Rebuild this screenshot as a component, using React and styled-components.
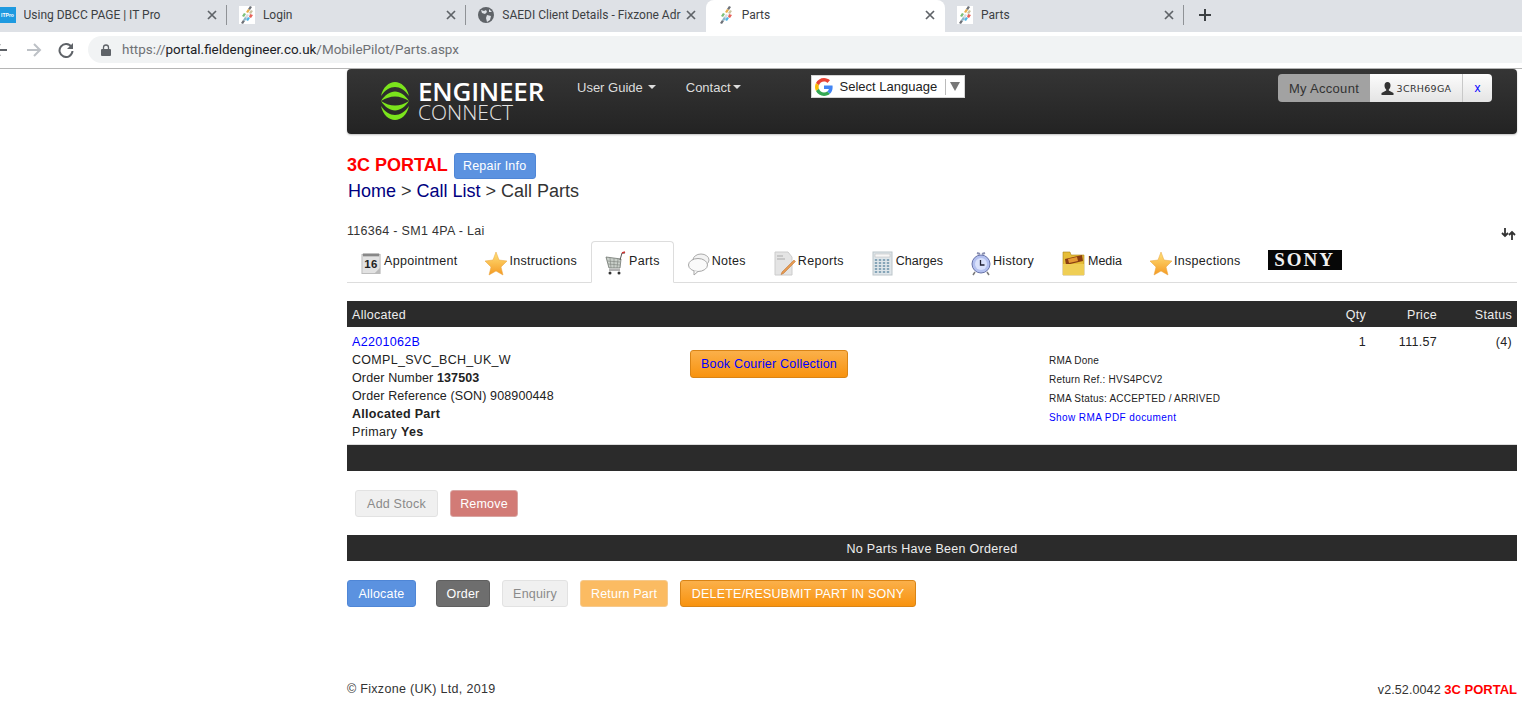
import React, { useId } from "react"
import styled, { createGlobalStyle } from "styled-components"

const GlobalStyle = createGlobalStyle`
  html, body {
    margin: 0;
    padding: 0;
    background: #fff;
    overflow: hidden;
  }
  body {
    font-family: "Liberation Sans", Arial, sans-serif;
    font-size: 12.5px;
    color: #333;
  }
`

/* browser chrome */
const TabStrip = styled.div`
  display: flex;
  height: 32px;
  background: #dee1e6;
  margin-left: -12.5px;
  width: 1534px;
  font-family: Roboto, "Noto Sans", sans-serif;
  font-size: 12px;
  color: #3c4043;
`
const BrowserTab = styled.div`
  display: flex;
  align-items: center;
  width: 239.4px;
  box-sizing: border-box;
  height: 32px;
  padding: 0 9px 2px 12px;
  background: ${(p) => (p.$active ? "#fff" : "transparent")};
  border-radius: ${(p) => (p.$active ? "8px 8px 0 0" : "0")};
  position: relative;
  &::after {
    content: "";
    display: ${(p) => (p.$divider ? "block" : "none")};
    position: absolute;
    right: 0;
    top: 5px;
    height: 20px;
    width: 1px;
    background: #8f9296;
  }
`
const TabTitle = styled.span`
  flex: 1;
  margin-left: 8px;
  white-space: nowrap;
  overflow: hidden;
`
const TabClose = styled.svg`
  width: 10px;
  height: 10px;
  flex: none;
  margin: 0 1px 0 3px;
`
const NewTab = styled.svg`
  width: 12px;
  height: 12px;
  margin: 9px 0 0 15px;
`
const ITProIcon = styled.span`
  width: 16px;
  height: 16px;
  flex: none;
  background: #1e9ae0;
  color: #fff;
  font: bold 5px/16px "Liberation Sans", sans-serif;
  text-align: center;
`
const Toolbar = styled.div`
  display: flex;
  align-items: center;
  height: 37px;
  box-sizing: border-box;
  padding: 2px 0 3px;
  background: #fff;
  border-bottom: 1px solid #b5b5b5;
`
const NavIcon = styled.svg`
  width: 16px;
  height: 16px;
  flex: none;
  margin-left: ${(p) => p.$gap}px;
`
const Omnibox = styled.div`
  flex: 1;
  display: flex;
  align-items: center;
  height: 27px;
  margin-left: 14px;
  padding-left: 13px;
  background: #f1f3f4;
  border-radius: 14px 0 0 14px;
  font-family: Roboto, "Noto Sans", sans-serif;
  font-size: 13.45px;
  color: #6f7175;
`
const LockIcon = styled.svg`
  width: 10px;
  height: 12px;
  margin-right: 11px;
`
const Host = styled.span`
  color: #202124;
`

/* page */
const Page = styled.div`
  width: 1170px;
  margin-left: 347px;
`
const NavBar = styled.header`
  display: flex;
  height: 65px;
  padding-left: 33px;
  box-sizing: border-box;
  border-radius: 4px;
  background: linear-gradient(#353535, #232323);
  box-shadow: 0 1px 2px rgba(0, 0, 0, 0.25);
  color: #ddd;
  font-size: 13px;
`
const Brand = styled.div`
  display: flex;
  width: 197px;
  padding-top: 10px;
  flex: none;
`
const BrandMark = styled.svg`
  width: 30px;
  height: 38px;
  margin-right: 8px;
  margin-top: 3px;
`
const BrandText = styled.div`
  font-family: "Open Sans", sans-serif;
  color: #fff;
`
const BrandTop = styled.div`
  font-size: 26px;
  line-height: 24px;
  font-weight: 600;
  letter-spacing: -0.2px;
`
const BrandBottom = styled.div`
  font-size: 21px;
  line-height: 18px;
  font-weight: 300;
  color: #e4e4e4;
`
const NavLink = styled.div`
  display: flex;
  align-items: center;
  height: 36px;
  margin-right: ${(p) => p.$gap}px;
`
const Caret = styled.span`
  width: 0;
  height: 0;
  margin-left: ${(p) => p.$gap}px;
  border: 4px solid transparent;
  border-top-color: #ddd;
  border-bottom: 0;
`
const LanguageBox = styled.div`
  display: flex;
  align-items: center;
  width: 154px;
  height: 23px;
  margin-top: 6px;
  box-sizing: border-box;
  padding-left: 3px;
  background: #fff;
  border: 1px solid #d5d5d5;
  color: #222;
  font-size: 13px;
`
const GoogleIcon = styled.svg`
  width: 18px;
  height: 18px;
  margin-right: 7px;
`
const LanguageSplit = styled.span`
  width: 1px;
  height: 16px;
  background: #bbb;
  margin: 0 4px 0 8px;
`
const LanguageArrow = styled.span`
  width: 0;
  height: 0;
  border: 5px solid transparent;
  border-top: 9px solid #777;
  border-bottom: 0;
`
const AccountGroup = styled.div`
  display: flex;
  height: 28px;
  margin: 5px 25px 0 auto;
  border-radius: 4px;
  overflow: hidden;
`
const AccountLabel = styled.div`
  width: 92px;
  display: flex;
  align-items: center;
  justify-content: center;
  background: #a2a2a2;
  color: #333;
  font-size: 13px;
  letter-spacing: 0.3px;
`
const AccountUser = styled.div`
  width: 93px;
  display: flex;
  align-items: center;
  justify-content: center;
  box-sizing: border-box;
  background: linear-gradient(#fcfcfc, #e4e4e4);
  border-right: 1px solid #c8c8c8;
  color: #333;
  font-family: "DejaVu Sans", sans-serif;
  font-size: 9.5px;
  letter-spacing: 0.3px;
`
const UserIcon = styled.svg`
  width: 13px;
  height: 13px;
  margin-right: 3px;
`
const AccountClose = styled.div`
  width: 29px;
  display: flex;
  align-items: center;
  justify-content: center;
  background: linear-gradient(#fcfcfc, #e4e4e4);
  color: #00f;
  font-size: 12px;
`
const TitleRow = styled.div`
  display: flex;
  align-items: center;
  margin-top: 19px;
  height: 26px;
`
const PortalTitle = styled.span`
  font-size: 18px;
  font-weight: bold;
  color: #f00;
  margin: -2px 6px 0 0;
`
const Breadcrumb = styled.div`
  font-size: 18px;
  line-height: 24px;
  padding-left: 1px;
  color: #333;
`
const Crumb = styled.a`
  color: #000080;
`
const InfoRow = styled.div`
  display: flex;
  justify-content: space-between;
  align-items: center;
  margin-top: 18px;
  height: 20px;
  letter-spacing: 0.3px;
`
const SwapIcon = styled.svg`
  width: 15px;
  height: 14px;
  margin: 5px 1px 0 0;
`
const TabNav = styled.nav`
  display: flex;
  height: 42px;
  box-sizing: border-box;
  border-bottom: 1px solid #ddd;
`
const TabLink = styled.div`
  display: flex;
  align-items: center;
  height: 42px;
  box-sizing: border-box;
  padding: 0 13px 2px;
  letter-spacing: ${(p) => (p.$tight ? "0" : "0.3px")};
  color: #222;
  border: 1px solid ${(p) => (p.$active ? "#ddd" : "transparent")};
  border-bottom-color: ${(p) => (p.$active ? "#fff" : "transparent")};
  border-radius: 4px 4px 0 0;
  background: ${(p) => (p.$active ? "#fff" : "transparent")};
`
const TabIcon = styled.svg`
  width: ${(p) => p.$w || 22}px;
  height: 25px;
  flex: none;
  margin: 5px 2px 0 0;
`
const SonyLogo = styled.div`
  width: 74px;
  height: 20px;
  margin: 9px 0 0 13px;
  background: #070707;
  color: #f2f2f2;
  font: bold 19px/20px "Liberation Serif", serif;
  text-align: center;
  letter-spacing: 2px;
`
const DarkBar = styled.div`
  display: ${(p) => (p.$grid ? "grid" : "block")};
  grid-template-columns: 343px 359px 280px 42px 71px 75px;
  height: 26px;
  line-height: 28px;
  margin-top: ${(p) => p.$top || 0}px;
  background: #2b2b2b;
  color: #eee;
  text-align: ${(p) => (p.$center ? "center" : "left")};
  letter-spacing: 0.3px;
`
const PartsRow = styled.div`
  display: grid;
  grid-template-columns: 343px 359px 280px 42px 71px 75px;
  height: 118px;
  box-sizing: border-box;
  border-bottom: 1px solid #ddd;
  letter-spacing: 0.3px;
`
const Cell = styled.div`
  padding: ${(p) => (p.$body ? "6px 5px 0" : "0 5px")};
  text-align: ${(p) => (p.$right ? "right" : "left")};
`
const PartLine = styled.div`
  line-height: 18px;
  color: #222;
  letter-spacing: ${(p) => (p.$tight ? "0.12px" : "inherit")};
`
const PartLink = styled.a`
  color: #00f;
`
const CourierCell = styled.div`
  padding-top: 23px;
`
const RmaCell = styled.div`
  padding-top: 24px;
  font-size: 10px;
  line-height: 19px;
  color: #222;
  letter-spacing: 0.22px;
`
const RmaLink = styled.a`
  color: #00f;
  letter-spacing: 0.4px;
`
const Qty = styled.div`
  padding: 6px 5px 0 0;
  line-height: 18px;
  text-align: right;
  color: #222;
`
const ButtonRow = styled.div`
  display: flex;
  align-items: center;
  margin-top: ${(p) => p.$top}px;
  padding-left: ${(p) => p.$left || 0}px;
`
const tones = {
  blue: ["#5b92e0", "#5b92e0", "#fff", "#4f86d6"],
  grey: ["#6e6e6e", "#6e6e6e", "#fff", "#5f5f5f"],
  off: ["#f0f0f0", "#f0f0f0", "#8a8a8a", "#e2e2e2"],
  red: ["#d27b76", "#d27b76", "#fff", "#d9a5a2"],
  pale: ["#fbbb62", "#fbbb62", "#fff", "#f5c98d"],
  orange: ["#fbb04a", "#f8930f", "#fff", "#d98416"],
}
const Button = styled.button`
  height: ${(p) => p.$h || 27}px;
  width: ${(p) => p.$w}px;
  margin-right: ${(p) => p.$gap || 0}px;
  padding: 0;
  border-radius: 3px;
  border: 1px solid ${(p) => tones[p.$tone][3]};
  background: linear-gradient(${(p) => tones[p.$tone][0]}, ${(p) => tones[p.$tone][1]});
  color: ${(p) => p.$ink || tones[p.$tone][2]};
  font-family: "Liberation Sans", Arial, sans-serif;
  font-size: 12.5px;
  letter-spacing: 0.2px;
`
const Footer = styled.footer`
  display: flex;
  justify-content: space-between;
  margin-top: 75px;
  letter-spacing: 0.3px;
`
const FooterVersion = styled.span`
  letter-spacing: 0.1px;
`
const FooterBrand = styled.b`
  color: #f00;
  font-size: 13px;
  letter-spacing: 0;
`

const Close = () => (
  <TabClose viewBox="0 0 10 10">
    <path d="M1 1l8 8M9 1L1 9" stroke="#5f6368" strokeWidth="1.7" />
  </TabClose>
)

const SiteFavicon = () => (
  <svg width="16" height="18" viewBox="0 0 16 18" style={{ flex: "none" }}>
    <rect width="16" height="18" fill="#fff" />
    <path d="M11 0l2 1-2 3-2-1zM4 14l2 1-2 3-2-1z" fill="#6d7178" />
    <path d="M9 3l2 1-2 3-2-1z" fill="#e8b04c" />
    <path d="M12 4l2 1-2 3-2-1z" fill="#c9c4a0" />
    <path d="M5 7l2 1-2 3-2-1z" fill="#7cc07a" />
    <path d="M11 8l3 1-2 3-2-1z" fill="#e7625a" />
    <path d="M8 8l2 1-2 3-2-1z" fill="#d9dde0" />
    <path d="M6 11l2 1-2 3-2-1z" fill="#8fb7c9" />
    <path d="M9 11l2 1-2 3-2-1z" fill="#52b7e6" />
  </svg>
)

const GlobeFavicon = () => (
  <svg width="16" height="16" viewBox="0 0 16 16" style={{ flex: "none" }}>
    <circle cx="8" cy="8" r="8" fill="#5f6368" />
    <path d="M3 3l3 1 2-1 1 2-2 2-3-1zM9 8l4 1-1 4-3 2-1-4zM11 2l3 3-3 0z" fill="#dee1e6" />
  </svg>
)

const Star = () => {
  const id = useId()
  return (
    <TabIcon viewBox="0 0 22 25">
      <defs>
        <linearGradient id={id} x1="0" y1="0" x2="0" y2="1">
          <stop offset="0" stopColor="#ffe27a" />
          <stop offset="1" stopColor="#f59a23" />
        </linearGradient>
      </defs>
      <path d="M11 1l3 8 8 1-6 6 2 8-7-4-7 4 2-8-6-6 8-1z" fill={`url(#${id})`} stroke="#e8a33a" strokeWidth=".5" />
    </TabIcon>
  )
}

const CalendarIcon = () => (
  <TabIcon $w={21} viewBox="0 0 22 25">
    <rect x="1" y="3" width="19" height="20" fill="#e2e2e2" stroke="#bbb" />
    <path d="M2 2h17v3H2z" fill="#888" />
    <text x="10.5" y="17" textAnchor="middle" fontSize="12" fontWeight="bold" fontFamily="Liberation Sans" fill="#222">16</text>
    <path d="M14 23l6-6v6z" fill="#bbb" />
  </TabIcon>
)

const CartIcon = () => (
  <TabIcon viewBox="0 0 22 25">
    <path d="M1 6l15 2-1 9H4z" fill="#c9cfc9" stroke="#6f756f" strokeWidth=".8" />
    <path d="M5 7l1 10M9 7.500v9.500M13 8l-1 9M2 10l13 1M3 13l12 1" stroke="#7d837d" strokeWidth=".6" />
    <path d="M15 9l2-7h3" stroke="#555" fill="none" />
    <path d="M17 2l3-1" stroke="#c33" strokeWidth="1.500" />
    <path d="M4 19h11" stroke="#666" />
    <circle cx="5" cy="22" r="1.500" fill="#333" />
    <circle cx="14" cy="22" r="1.500" fill="#333" />
  </TabIcon>
)

const NotesIcon = () => (
  <TabIcon viewBox="0 0 22 25">
    <ellipse cx="13" cy="9" rx="8" ry="6" fill="#f3f3f3" stroke="#aaa" />
    <ellipse cx="10" cy="14" rx="9.500" ry="6.500" fill="#fafafa" stroke="#a5a5a5" />
    <path d="M6 20v4l4-3.500" fill="#fafafa" stroke="#a5a5a5" />
  </TabIcon>
)

const ReportIcon = () => (
  <TabIcon viewBox="0 0 22 25">
    <path d="M1 1h13l4 5v18H1z" fill="#e4e4e4" stroke="#ccc" />
    <path d="M3 5h6M3 8h8" stroke="#aaa" />
    <path d="M8 21l12-12 1.500 1.500-12 12-2.500 1z" fill="#e69a50" stroke="#b86f2e" strokeWidth=".5" />
  </TabIcon>
)

const CalculatorIcon = () => (
  <TabIcon viewBox="0 0 22 25">
    <rect x="1" y="1" width="19" height="23" fill="#dfe6ea" stroke="#bcc5ca" />
    <rect x="3" y="3" width="15" height="3" fill="#f7f7f7" stroke="#b5b5b5" strokeWidth=".5" />
    <path d="M4 8v14M8 8v14M12 8v14M16 8v14" stroke="#86a5b8" strokeWidth="2.400" strokeDasharray="2 1" />
  </TabIcon>
)

const ClockIcon = () => (
  <TabIcon $w={20} viewBox="0 0 20 25">
    <path d="M6 2l3 1M14 2l-3 1" stroke="#8a8fb0" strokeWidth="2" />
    <path d="M4 21l-2 3M16 21l2 3" stroke="#777" strokeWidth="1.500" />
    <circle cx="10" cy="13" r="9" fill="#b3c0ef" stroke="#6772a8" />
    <circle cx="10" cy="13" r="6" fill="#d9e1fb" />
    <path d="M9.500 9v5h4" stroke="#223" strokeWidth="1.300" fill="none" />
  </TabIcon>
)

const MediaIcon = () => (
  <TabIcon $w={24} viewBox="0 0 24 25">
    <path d="M1 1h7l1 3h13v20H1z" fill="#e6bd37" stroke="#a9851a" strokeWidth=".6" />
    <path d="M3 8l17-4 1 6-17 4z" fill="#8a3d12" />
    <path d="M6 8l9-2 1 4-9 2z" fill="#e59a34" />
    <path d="M1 13h21v11H1z" fill="#efce55" />
  </TabIcon>
)

const menu = [
  { label: "Appointment", icon: <CalendarIcon /> },
  { label: "Instructions", icon: <Star /> },
  { label: "Parts", icon: <CartIcon />, active: true },
  { label: "Notes", icon: <NotesIcon /> },
  { label: "Reports", icon: <ReportIcon /> },
  { label: "Charges", icon: <CalculatorIcon />, tight: true },
  { label: "History", icon: <ClockIcon /> },
  { label: "Media", icon: <MediaIcon />, tight: true },
  { label: "Inspections", icon: <Star /> },
]

const App = () => {
  return (
    <>
      <GlobalStyle />
      <TabStrip>
        <BrowserTab $divider>
          <ITProIcon>ITPro</ITProIcon>
          <TabTitle>Using DBCC PAGE | IT Pro</TabTitle>
          <Close />
        </BrowserTab>
        <BrowserTab $divider>
          <SiteFavicon />
          <TabTitle>Login</TabTitle>
          <Close />
        </BrowserTab>
        <BrowserTab>
          <GlobeFavicon />
          <TabTitle>SAEDI Client Details - Fixzone Adr</TabTitle>
          <Close />
        </BrowserTab>
        <BrowserTab $active>
          <SiteFavicon />
          <TabTitle>Parts</TabTitle>
          <Close />
        </BrowserTab>
        <BrowserTab $divider>
          <SiteFavicon />
          <TabTitle>Parts</TabTitle>
          <Close />
        </BrowserTab>
        <NewTab viewBox="0 0 12 12">
          <path d="M6 0v12M0 6h12" stroke="#3c4043" strokeWidth="2" />
        </NewTab>
      </TabStrip>
      <Toolbar>
        <NavIcon $gap={-8} viewBox="0 0 16 16">
          <path d="M15 8H2M8 2L2 8l6 6" fill="none" stroke="#5f6368" strokeWidth="2" />
        </NavIcon>
        <NavIcon $gap={18} viewBox="0 0 16 16">
          <path d="M1 8h13M8 2l6 6-6 6" fill="none" stroke="#bdc1c6" strokeWidth="2" />
        </NavIcon>
        <NavIcon $gap={16} viewBox="0 0 16 16">
          <path d="M13.500 5A6.500 6.500 0 1 0 14.500 9" fill="none" stroke="#5f6368" strokeWidth="2" />
          <path d="M15 1v6H9z" fill="#5f6368" />
        </NavIcon>
        <Omnibox>
          <LockIcon viewBox="0 0 10 12">
            <path d="M2.500 5V3.500a2.500 2.500 0 0 1 5 0V5" fill="none" stroke="#5f6368" strokeWidth="1.300" />
            <rect y="5" width="10" height="7" rx="1" fill="#5f6368" />
          </LockIcon>
          https://<Host>portal.fieldengineer.co.uk</Host>/MobilePilot/Parts.aspx
        </Omnibox>
      </Toolbar>
      <Page>
        <NavBar>
          <Brand>
            <BrandMark viewBox="0 0 30 38">
              <g fill="#7be41c">
                <path d="M1 14C3 5 9 0 15 0s12 5 14 14C25 8 20 5 15 5S5 8 1 14z" />
                <path d="M1 19C5 13 10 9.500 15 9.500S25 13 29 19C24 16 20 14.500 15 14.500S6 16 1 19z" />
                <g transform="matrix(1 0 0 -1 0 38)">
                  <path d="M1 14C3 5 9 0 15 0s12 5 14 14C25 8 20 5 15 5S5 8 1 14z" />
                  <path d="M1 19C5 13 10 9.500 15 9.500S25 13 29 19C24 16 20 14.500 15 14.500S6 16 1 19z" />
                </g>
              </g>
            </BrandMark>
            <BrandText>
              <BrandTop>ENGINEER</BrandTop>
              <BrandBottom>CONNECT</BrandBottom>
            </BrandText>
          </Brand>
          <NavLink $gap={30}>
            User Guide<Caret $gap={5} />
          </NavLink>
          <NavLink $gap={70}>
            Contact<Caret $gap={2} />
          </NavLink>
          <LanguageBox>
            <GoogleIcon viewBox="0 0 48 48">
              <path fill="#EA4335" d="M24 9.500c3.500 0 6.700 1.300 9.100 3.500l6.800-6.800C35.800 2.400 30.200 0 24 0 14.600 0 6.500 5.400 2.600 13.200l7.900 6.200C12.400 13.700 17.700 9.500 24 9.500z" />
              <path fill="#4285F4" d="M47 24.500c0-1.600-.1-3.100-.4-4.500H24v9h13c-.6 3-2.300 5.500-4.800 7.200l7.700 6C44.400 37.900 47 31.800 47 24.500z" />
              <path fill="#FBBC05" d="M10.500 28.600c-.5-1.400-.8-3-.8-4.600s.3-3.200.8-4.600l-7.900-6.200C.9 16.500 0 20.100 0 24s.9 7.500 2.600 10.800z" />
              <path fill="#34A853" d="M24 48c6.500 0 11.900-2.100 15.900-5.800l-7.700-6c-2.100 1.400-4.900 2.300-8.200 2.300-6.300 0-11.600-4.200-13.500-9.900l-7.900 6.200C6.500 42.600 14.600 48 24 48z" />
            </GoogleIcon>
            Select Language
            <LanguageSplit />
            <LanguageArrow />
          </LanguageBox>
          <AccountGroup>
            <AccountLabel>My Account</AccountLabel>
            <AccountUser>
              <UserIcon viewBox="0 0 13 13">
                <path d="M6.500 0C8.500 0 9.500 1.500 9.500 3.500S8.500 7 7.800 7.500v1L12.500 11v2H.500v-2l4.700-2.500v-1C4.500 7 3.500 5.500 3.500 3.500S4.500 0 6.500 0z" fill="#333" />
              </UserIcon>
              3CRH69GA
            </AccountUser>
            <AccountClose>x</AccountClose>
          </AccountGroup>
        </NavBar>

        <TitleRow>
          <PortalTitle>3C PORTAL</PortalTitle>
          <Button $tone="blue" $w={82} $h={26}>Repair Info</Button>
        </TitleRow>
        <Breadcrumb>
          <Crumb>Home</Crumb> &gt; <Crumb>Call List</Crumb> &gt; Call Parts
        </Breadcrumb>

        <InfoRow>
          116364 - SM1 4PA - Lai
          <SwapIcon viewBox="0 0 15 14">
            <path d="M4 1v8M1 6l3 3 3-3M11 13V5M8 8l3-3 3 3" fill="none" stroke="#333" strokeWidth="1.800" />
          </SwapIcon>
        </InfoRow>
        <TabNav>
          {menu.map((item) => {
            return (
              <TabLink key={item.label} $active={item.active} $tight={item.tight}>
                {item.icon}
                {item.label}
              </TabLink>
            )
          })}
          <SonyLogo>SONY</SonyLogo>
        </TabNav>

        <DarkBar $grid $top={18}>
          <Cell>Allocated</Cell>
          <Cell />
          <Cell />
          <Cell $right>Qty</Cell>
          <Cell $right>Price</Cell>
          <Cell $right>Status</Cell>
        </DarkBar>
        <PartsRow>
          <Cell $body>
            <PartLine><PartLink>A2201062B</PartLink></PartLine>
            <PartLine>COMPL_SVC_BCH_UK_W</PartLine>
            <PartLine $tight>Order Number <b>137503</b></PartLine>
            <PartLine $tight>Order Reference (SON) 908900448</PartLine>
            <PartLine><b>Allocated Part</b></PartLine>
            <PartLine>Primary <b>Yes</b></PartLine>
          </Cell>
          <CourierCell>
            <Button $tone="orange" $w={158} $h={28} $ink="#00f">Book Courier Collection</Button>
          </CourierCell>
          <RmaCell>
            <div>RMA Done</div>
            <div>Return Ref.: HVS4PCV2</div>
            <div>RMA Status: ACCEPTED / ARRIVED</div>
            <RmaLink>Show RMA PDF document</RmaLink>
          </RmaCell>
          <Qty>1</Qty>
          <Qty>111.57</Qty>
          <Qty>(4)</Qty>
        </PartsRow>
        <DarkBar />

        <ButtonRow $top={19} $left={8}>
          <Button $tone="off" $w={83} $gap={12}>Add Stock</Button>
          <Button $tone="red" $w={68}>Remove</Button>
        </ButtonRow>
        <DarkBar $center $top={18}>No Parts Have Been Ordered</DarkBar>
        <ButtonRow $top={19}>
          <Button $tone="blue" $w={69} $gap={20}>Allocate</Button>
          <Button $tone="grey" $w={54} $gap={12}>Order</Button>
          <Button $tone="off" $w={66} $gap={12}>Enquiry</Button>
          <Button $tone="pale" $w={88} $gap={12}>Return Part</Button>
          <Button $tone="orange" $w={236}>DELETE/RESUBMIT PART IN SONY</Button>
        </ButtonRow>

        <Footer>
          <span>© Fixzone (UK) Ltd, 2019</span>
          <FooterVersion>v2.52.0042 <FooterBrand>3C PORTAL</FooterBrand></FooterVersion>
        </Footer>
      </Page>
    </>
  )
}

export default App
